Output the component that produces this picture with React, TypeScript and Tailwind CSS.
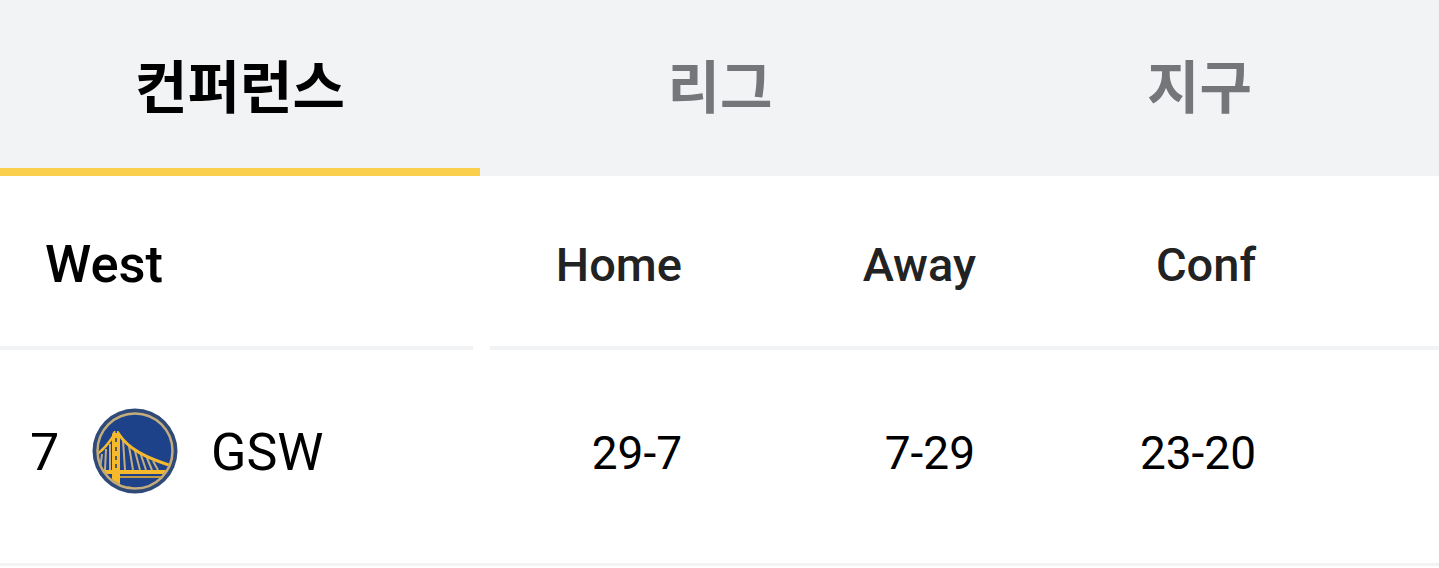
const Logo = () => (
  <svg viewBox="0 0 86 86" className="w-[86px] h-[86px] shrink-0">
    <defs>
      <clipPath id="inner">
        <circle cx="43" cy="43" r="36.5" />
      </clipPath>
    </defs>
    <circle cx="43" cy="43" r="42.5" fill="#2f4a78" />
    <circle cx="43" cy="43" r="37.5" fill="#1d428a" stroke="#c4ad7c" strokeWidth="2.5" />
    <g clipPath="url(#inner)">
      <g stroke="#c4ad7c" strokeWidth="2" fill="none">
        <path d="M10 46L8 62M14 41L13 62M18 36L18 62" />
        <path d="M31 32L33 62M37 38L41 62M43 43L48 62M49 47L54 62M55 50L60 62M61 53L66 62" />
      </g>
      <g fill="none" stroke="#f7b92c">
        <path d="M4 47C11 42 17 35 22 27" strokeWidth="2.4" />
        <path d="M26 25C37 42 55 50 80 58" strokeWidth="3" />
        <path d="M2 64H76" strokeWidth="4" />
        <path d="M27 69H74" strokeWidth="1.5" />
        <path d="M12 70C18 74 26 78 40 80" strokeWidth="2" />
      </g>
      <path d="M20 26L22 23H23.5V25H25V23H26.5L28 26V80H20Z" fill="#f7b92c" />
      <path d="M24 30V34M24 39V43M24 48V52M24 56V60" stroke="#33405f" strokeWidth="1.6" />
    </g>
  </svg>
);

const rows = [{ rank: "7", team: "GSW", home: "29-7", away: "7-29", conf: "23-20" }];

export default function App() {
  return (
    <div className="w-[1439px] h-[568px] bg-white overflow-hidden font-['Roboto',sans-serif]">
      <div className="flex h-[176px] bg-[#f2f3f5] font-['Noto_Sans_CJK_KR','Noto_Sans_CJK_SC',sans-serif] text-[57px] font-bold">
        <div className="w-[480px] flex items-center justify-center border-b-8 border-[#f9cf4d] text-black">컨퍼런스</div>
        <div className="w-[480px] flex items-center justify-center border-b-8 border-transparent text-[#747679]">리그</div>
        <div className="w-[479px] flex items-center justify-center border-b-8 border-transparent text-[#747679]">지구</div>
      </div>
      <div className="flex items-center h-[170px] pt-[6px] text-[47px] font-medium text-[#222222] leading-none">
        <div className="w-[480px] pl-[45px] text-[52.5px] text-black">West</div>
        <div className="w-[202px] text-right">Home</div>
        <div className="w-[294px] text-right">Away</div>
        <div className="w-[280px] text-right">Conf</div>
      </div>
      <div className="flex h-[4px] gap-[17px]">
        <div className="w-[473px] bg-[#f2f3f5]"></div>
        <div className="flex-1 bg-[#f2f3f5]"></div>
      </div>
      {rows.map((row) => (
        <div key={row.team} className="flex items-center h-[201px] pb-[12px] text-[46px] text-black leading-none border-b-[3px] border-[#f2f3f5] box-content">
          <div className="w-[480px] pl-[30px] flex items-center text-[52px]">
            <span className="w-[63px] pt-[4px]">{row.rank}</span>
            <div className="-ml-[1px]">
              <Logo />
            </div>
            <span className="ml-[33px] pt-[4px]">{row.team}</span>
          </div>
          <div className="w-[202px] pt-[4px] text-right">{row.home}</div>
          <div className="w-[293px] pt-[4px] text-right">{row.away}</div>
          <div className="w-[281px] pt-[4px] text-right">{row.conf}</div>
        </div>
      ))}
    </div>
  );
}
